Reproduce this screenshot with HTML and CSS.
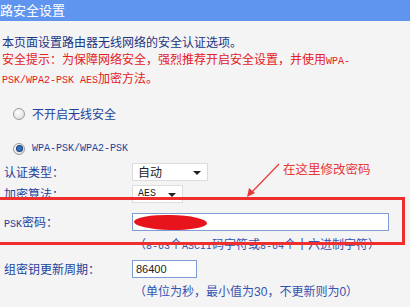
FILE: index.html
```html
<!DOCTYPE html>
<html lang="zh-CN">
<head>
    <meta charset="UTF-8">
    <title>无线网络安全设置</title>
    <link rel="stylesheet" href="styles.css">
</head>
<body>

<div class="header">路安全设置</div>

<div class="intro">
    <p>本页面设置路由器无线网络的安全认证选项。</p>
    <p class="warn">安全提示：为保障网络安全，强烈推荐开启安全设置，并使用<span class="en">WPA-</span></p>
    <p class="warn"><span class="en">PSK/WPA2-PSK AES</span>加密方法。</p>
</div>

<div class="opt opt-first">
    <span class="radio"></span>
    <span>不开启无线安全</span>
</div>

<div class="opt opt-second">
    <span class="radio checked"></span>
    <span class="en">WPA-PSK/WPA2-PSK</span>
</div>

<div class="row row-auth">
    <label>认证类型：</label>
    <div class="select wide">自动<span class="caret"></span></div>
</div>

<div class="row row-enc">
    <label>加密算法：</label>
    <div class="select narrow"><span class="en">AES</span><span class="caret"></span></div>
</div>

<div class="row row-psk">
    <label><span class="en">PSK</span>密码：</label>
    <div class="field long">
        <span class="scribble"></span>
    </div>
</div>
<div class="hint hint-psk">（<span class="en">8-63</span>个<span class="en">ASCII</span>码字符或<span class="en">8-64</span>个十六进制字符）</div>

<div class="row row-period">
    <label>组密钥更新周期：</label>
    <div class="field short">86400</div>
</div>
<div class="hint">（单位为秒，最小值为<span class="num">30</span>，不更新则为<span class="num">0</span>）</div>

<!-- annotation drawn over the screenshot -->
<div class="mark-box"></div>
<div class="mark-note">在这里修改密码</div>
<svg class="mark-arrow" width="410" height="307" viewBox="0 0 410 307">
    <line x1="279" y1="164" x2="251" y2="193" stroke="#e83838" stroke-width="1.2"/>
    <polygon points="247,197 249,188 255,193" fill="#e83838"/>
</svg>

</body>
</html>
```

FILE: styles.css
```css
body {
    margin: 0;
    height: 307px;
    overflow: hidden;
    position: relative;
    background: #f4f4f4;
    font-family: "Noto Sans CJK SC", sans-serif;
    font-size: 12px;
    color: #23419a;
}
.en {
    font-family: "Liberation Mono", monospace;
    font-size: 10px;
}
.num {
    font-family: "Liberation Sans", Arial, sans-serif;
}
.header {
    height: 21px;
    line-height: 20px;
    background: #5f95ef;
    color: #fff;
    font-size: 13px;
    padding-left: 0;
}
.intro {
    padding: 13px 0 0 2px;
    color: #1b3682;
}
.intro p {
    margin: 0;
    line-height: 16.5px;
}
.intro .warn {
    color: #e4201e;
}
.opt {
    display: flex;
    align-items: center;
    gap: 7px;
    height: 24px;
    padding-left: 13px;
    color: #23419a;
}
.opt-first {
    margin-top: 12px;
}
.opt-second {
    margin-top: 11px;
}
.radio {
    width: 10px;
    height: 10px;
    border: 1px solid #9b9b9b;
    border-radius: 50%;
    background: radial-gradient(circle at 40% 35%, #ffffff, #d6d6d6);
    display: flex;
    align-items: center;
    justify-content: center;
}
.radio.checked::after {
    content: "";
    width: 5px;
    height: 5px;
    border-radius: 50%;
    background: #2f6fc8;
    box-shadow: 0 0 0 1px #1d3f73;
}
.row {
    display: flex;
    align-items: center;
    height: 18px;
}
.row label {
    width: 128px;
    padding-left: 4px;
    color: #23419a;
}
.row-auth {
    margin-top: 2px;
}
.row-enc {
    margin-top: 4px;
}
.row-psk {
    margin-top: 10px;
}
.row-period {
    margin-top: 8px;
}
.select {
    box-sizing: border-box;
    height: 18px;
    background: #fff;
    border: 1px solid #dcdcdc;
    display: flex;
    align-items: center;
    padding-left: 5px;
    color: #222;
    position: relative;
}
.select.wide {
    width: 76px;
}
.select.narrow {
    width: 51px;
}
.caret {
    position: absolute;
    right: 6px;
    top: 7px;
    border-left: 4px solid transparent;
    border-right: 4px solid transparent;
    border-top: 4px solid #222;
}
.field {
    box-sizing: border-box;
    height: 18px;
    background: #fff;
    border: 1px solid #7f9cd4;
    position: relative;
    color: #222;
    font-family: "Liberation Sans", Arial, sans-serif;
    font-size: 11px;
    line-height: 16px;
    padding-left: 3px;
}
.field.long {
    width: 257px;
}
.field.short {
    width: 65px;
}
.scribble {
    position: absolute;
    left: 1px;
    top: 1px;
    width: 73px;
    height: 15px;
    border-radius: 50%;
    background: #e8141c;
    transform: rotate(1deg);
}
.hint {
    padding-left: 134px;
    height: 16px;
    line-height: 16px;
    color: #3453b0;
    margin-top: 5px;
}
.hint-psk {
    margin-top: 5px;
}
.mark-box {
    position: absolute;
    left: -10px;
    top: 197px;
    width: 415px;
    height: 48px;
    box-sizing: border-box;
    border: 3px solid #ef2e2e;
}
.mark-note {
    position: absolute;
    left: 283px;
    top: 159px;
    font-size: 12.5px;
    color: #e83838;
}
.mark-arrow {
    position: absolute;
    left: 0;
    top: 0;
}
```
